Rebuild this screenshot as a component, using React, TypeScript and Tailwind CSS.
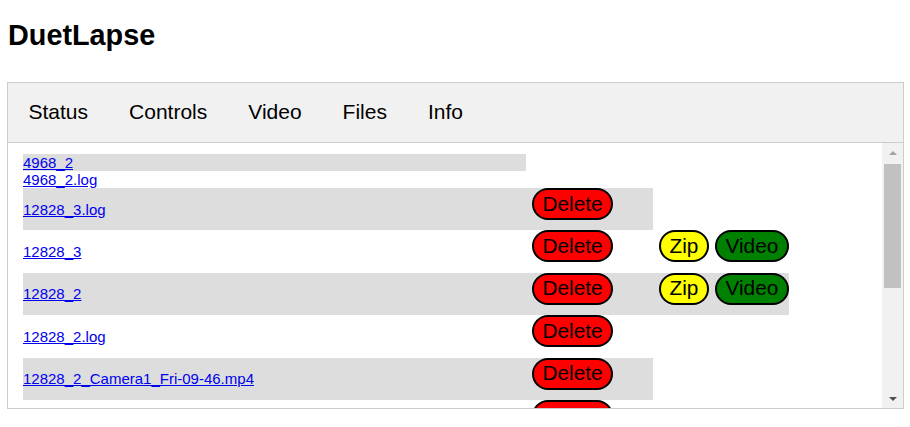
import React from 'react';

type FileRow = {
  name: string;
  del?: boolean;
  zip?: boolean;
  video?: boolean;
};

const rows: FileRow[] = [
  { name: '4968_2' },
  { name: '4968_2.log' },
  { name: '12828_3.log', del: true },
  { name: '12828_3', del: true, zip: true, video: true },
  { name: '12828_2', del: true, zip: true, video: true },
  { name: '12828_2.log', del: true },
  { name: '12828_2_Camera1_Fri-09-46.mp4', del: true },
  { name: '12828_1.log', del: true },
  { name: '12828_1', del: true, zip: true, video: true },
  { name: '12828_1_Camera1_Fri-08-12.mp4', del: true },
];

const tabs = ['Status', 'Controls', 'Video', 'Files', 'Info'];

const Pill: React.FC<{ label: string; color: string }> = ({ label, color }) => (
  <button
    className={`h-[32px] px-[8.5px] border-2 border-black rounded-full text-[20.8px] leading-none text-black ${color}`}
  >
    {label}
  </button>
);

const App: React.FC = () => {
  return (
    <div className="w-[910px] h-[427px] bg-white overflow-hidden font-['Liberation_Sans',Arial,sans-serif] text-black">
      <div className="pl-[8px] pt-[19px] text-[28.8px] font-bold leading-[33px]">DuetLapse</div>

      <div className="mt-[30px] ml-[7px] mr-[6px] border border-[#cccccc]">
        {/* Tab bar */}
        <div className="flex h-[60px] bg-[#f1f1f1] border-b border-[#cccccc]">
          {tabs.map((t) => (
            <button key={t} className="px-[20.5px] pb-[2px] h-full text-[21px] flex items-center">
              {t}
            </button>
          ))}
        </div>

        <div className="flex h-[265px]">
          {/* Files list */}
          <div className="flex-1 overflow-hidden pt-[11px] pl-[15px]">
            {rows.map((r, i) => (
              <div
                key={r.name}
                className={`flex w-fit ${r.del ? 'h-[42.4px]' : 'h-[17px]'} ${i % 2 === 0 ? 'bg-[#dddddd]' : ''}`}
              >
                <div className="w-[503px] flex items-center">
                  <a href="#" className="text-[15px] leading-[17px] text-[#0000ee] underline">
                    {r.name}
                  </a>
                </div>
                {r.del && (
                  <div className="w-[127px] pl-[6px]">
                    <Pill label="Delete" color="bg-[#ff0000]" />
                  </div>
                )}
                {r.zip && (
                  <div className="w-[56px] pl-[6px]">
                    <Pill label="Zip" color="bg-[#ffff00]" />
                  </div>
                )}
                {r.video && (
                  <div className="pl-[6px]">
                    <Pill label="Video" color="bg-[#008000]" />
                  </div>
                )}
              </div>
            ))}
          </div>

          {/* Scrollbar */}
          <div className="w-[21px] bg-[#f1f1f1] flex flex-col">
            <div className="h-[17px] flex items-center justify-center pt-[3px]">
              <div className="w-0 h-0 border-x-[4.5px] border-x-transparent border-b-[4.5px] border-b-[#a3a3a3]" />
            </div>
            <div className="mt-[4px] ml-[2px] w-[17px] h-[124px] bg-[#c1c1c1]" />
            <div className="flex-1" />
            <div className="h-[17px] flex items-center justify-center pb-[2px]">
              <div className="w-0 h-0 border-x-[4.5px] border-x-transparent border-t-[4.5px] border-t-[#505050]" />
            </div>
          </div>
        </div>
      </div>
    </div>
  );
};

export default App;
